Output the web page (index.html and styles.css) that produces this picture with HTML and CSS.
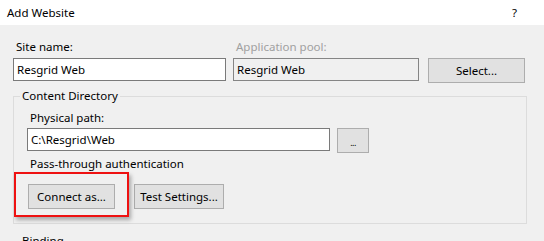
FILE: index.html
```html
<!DOCTYPE html>
<html>
<head>
<meta charset="utf-8">
<link rel="stylesheet" href="styles.css">
</head>
<body>
<div class="titlebar">
  <span class="title">Add Website</span>
  <span class="help">?</span>
</div>
<div class="content">
  <div class="site-row">
    <div class="label">Site name:</div>
    <div class="label disabled">Application pool:</div>
    <div></div>
    <div class="input">Resgrid Web</div>
    <div class="input readonly">Resgrid Web</div>
    <div class="btn select-btn">Select...</div>
  </div>
  <fieldset class="group">
    <legend class="group-title">Content Directory</legend>
    <div class="label">Physical path:</div>
    <div class="path-row">
      <div class="input path-input">C:\Resgrid\Web</div>
      <div class="btn browse-btn"><span class="dots">...</span></div>
    </div>
    <div class="label pass-label">Pass-through authentication</div>
    <div class="btn-row">
      <div class="highlight">
        <div class="btn connect-btn">Connect as...</div>
        <span class="redbox"></span>
      </div>
      <div class="btn test-btn">Test Settings...</div>
    </div>
  </fieldset>
  <div class="label binding">Binding</div>
</div>
</body>
</html>
```

FILE: styles.css
```css
html, body {
  margin: 0;
  padding: 0;
}
body {
  width: 544px;
  height: 241px;
  overflow: hidden;
  background: #f0f0f0;
  font-family: "Noto Sans", "Open Sans", sans-serif;
  font-size: 11.5px;
  color: #000;
}
.titlebar {
  height: 25px;
  background: #fff;
  display: flex;
  align-items: center;
  justify-content: space-between;
  padding: 0 27px 0 7px;
  box-sizing: border-box;
  font-size: 11.5px;
}
.content {
  padding: 14px 17px 0 13px;
}
.label {
  line-height: 16px;
  height: 16px;
  padding-left: 3px;
  white-space: nowrap;
}
.label.disabled {
  color: #a0a0a0;
}
.site-row {
  display: grid;
  grid-template-columns: 213px 186px 97px;
  column-gap: 7px;
  row-gap: 3px;
  align-items: start;
}
.site-row > :nth-child(3n) {
  margin-left: 2px;
}
.input {
  height: 23px;
  box-sizing: border-box;
  border: 1px solid #7a7a7a;
  background: #fff;
  padding: 0 3px;
  line-height: 21px;
  white-space: nowrap;
}
.input.readonly {
  background: #f0f0f0;
  border-color: #858585;
}
.btn {
  box-sizing: border-box;
  height: 25px;
  border: 1px solid #adadad;
  background: #e1e1e1;
  display: flex;
  align-items: center;
  justify-content: center;
  white-space: nowrap;
}
.select-btn {
  width: 97px;
}
.group {
  margin: 5px 0 0 0;
  border: 1px solid #dcdcdc;
  padding: 6px 13px 14px 13px;
  min-width: 0;
}
.group-title {
  margin-left: -7px;
  padding: 0 2px;
  line-height: 16px;
}
.path-row {
  display: flex;
  gap: 7px;
  margin-top: 2px;
  align-items: start;
}
.path-input {
  width: 303px;
}
.browse-btn {
  width: 32px;
  align-items: flex-end;
  padding-bottom: 5px;
}
.dots {
  font-size: 9px;
  line-height: 9px;
  letter-spacing: -0.5px;
}
.pass-label {
  margin-top: 3px;
}
.btn-row {
  display: flex;
  gap: 19px;
  margin-top: 12px;
  padding-left: 1px;
}
.highlight {
  position: relative;
}
.connect-btn {
  width: 87px;
}
.test-btn {
  width: 90px;
}
.redbox {
  position: absolute;
  left: -14px;
  top: -12px;
  right: -14px;
  bottom: -8px;
  border: 2px solid #ee1111;
  box-shadow: 2px 3px 4px rgba(0, 0, 0, 0.3);
}
.binding {
  margin-top: 9px;
  padding-left: 9px;
}
```
